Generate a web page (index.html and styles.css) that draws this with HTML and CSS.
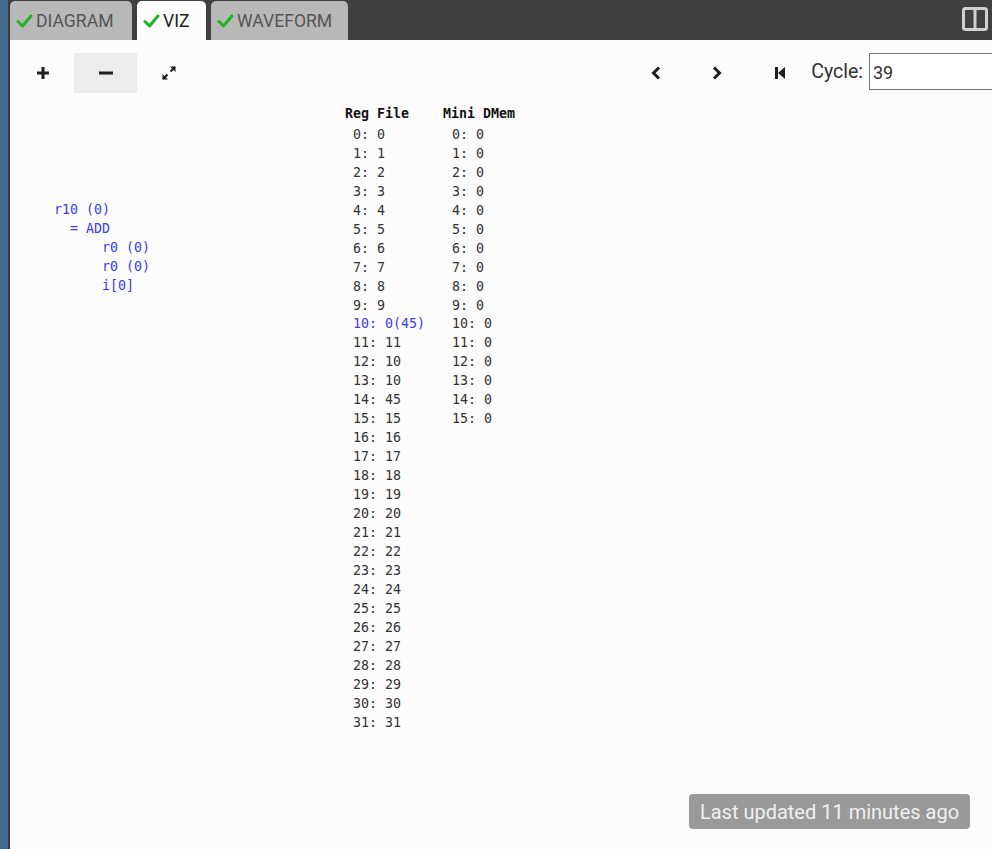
FILE: index.html
```html
<!DOCTYPE html>
<html>
<head>
<meta charset="utf-8">
<link rel="stylesheet" href="styles.css">
</head>
<body>
<div class="side"></div>
<div class="main">
  <div class="topbar">
    <div class="tabs">
      <div class="tab"><svg class="check" viewBox="0 0 16 14" width="17" height="14"><path d="M1.5 7.5 L6 12 L14.5 2" fill="none" stroke="#1fb51f" stroke-width="3" stroke-linecap="round" stroke-linejoin="round"/></svg>DIAGRAM</div>
      <div class="tab active"><svg class="check" viewBox="0 0 16 14" width="17" height="14"><path d="M1.5 7.5 L6 12 L14.5 2" fill="none" stroke="#1fb51f" stroke-width="3" stroke-linecap="round" stroke-linejoin="round"/></svg>VIZ</div>
      <div class="tab wave"><svg class="check" viewBox="0 0 16 14" width="17" height="14"><path d="M1.5 7.5 L6 12 L14.5 2" fill="none" stroke="#1fb51f" stroke-width="3" stroke-linecap="round" stroke-linejoin="round"/></svg>WAVEFORM</div>
    </div>
    <svg class="split" viewBox="0 0 26 24" width="26" height="24"><rect x="1.5" y="1.5" width="23" height="21" rx="2" fill="none" stroke="#d0d0d0" stroke-width="3"/><line x1="13" y1="2" x2="13" y2="22" stroke="#d0d0d0" stroke-width="3"/></svg>
  </div>
  <div class="content">
    <div class="toolbar">
      <div class="zoom">
        <button class="btn"><svg viewBox="0 0 14 14" width="14" height="14"><path d="M7 1v12M1 7h12" stroke="#1f1f1f" stroke-width="3"/></svg></button>
        <button class="btn pressed"><svg viewBox="0 0 14 14" width="14" height="14"><path d="M0 7h14" stroke="#1f1f1f" stroke-width="3"/></svg></button>
        <button class="btn"><svg viewBox="0 0 16 16" width="16" height="16"><path d="M9.5 6.5 L14 2 M6.5 9.5 L2 14" stroke="#1f1f1f" stroke-width="2"/><path d="M9 1.5h5.5v5.5z M7 14.5h-5.5v-5.5z" fill="#1f1f1f"/></svg></button>
      </div>
      <div class="nav">
        <button class="nbtn"><svg viewBox="0 0 10 14" width="10" height="14"><path d="M8 1.5 L2.5 7 L8 12.5" fill="none" stroke="#1f1f1f" stroke-width="3"/></svg></button>
        <button class="nbtn"><svg viewBox="0 0 10 14" width="10" height="14"><path d="M2 1.5 L7.5 7 L2 12.5" fill="none" stroke="#1f1f1f" stroke-width="3"/></svg></button>
        <button class="nbtn first"><svg viewBox="0 0 12 14" width="12" height="14"><rect x="1" y="1" width="3" height="12" fill="#1f1f1f"/><path d="M11 1 L4 7 L11 13z" fill="#1f1f1f"/></svg></button>
        <label class="cycle">Cycle:</label>
        <input class="cycle-input" type="text" value="39">
      </div>
    </div>
    <div class="viz">
      <div class="expr">
        <div>r10 (0)</div>
        <div class="i1">= ADD</div>
        <div class="i2">r0 (0)</div>
        <div class="i2">r0 (0)</div>
        <div class="i2">i[0]</div>
      </div>
      <div class="table regs">
        <div class="head">Reg File</div>
        <div>0: 0</div><div>1: 1</div><div>2: 2</div><div>3: 3</div><div>4: 4</div>
        <div>5: 5</div><div>6: 6</div><div>7: 7</div><div>8: 8</div><div>9: 9</div>
        <div class="hl">10: 0(45)</div><div>11: 11</div><div>12: 10</div><div>13: 10</div><div>14: 45</div>
        <div>15: 15</div><div>16: 16</div><div>17: 17</div><div>18: 18</div><div>19: 19</div>
        <div>20: 20</div><div>21: 21</div><div>22: 22</div><div>23: 23</div><div>24: 24</div>
        <div>25: 25</div><div>26: 26</div><div>27: 27</div><div>28: 28</div><div>29: 29</div>
        <div>30: 30</div><div>31: 31</div>
      </div>
      <div class="table mem">
        <div class="head">Mini DMem</div>
        <div>0: 0</div><div>1: 0</div><div>2: 0</div><div>3: 0</div><div>4: 0</div>
        <div>5: 0</div><div>6: 0</div><div>7: 0</div><div>8: 0</div><div>9: 0</div>
        <div>10: 0</div><div>11: 0</div><div>12: 0</div><div>13: 0</div><div>14: 0</div>
        <div>15: 0</div>
      </div>
    </div>
    <div class="badge">Last updated 11 minutes ago</div>
  </div>
</div>
</body>
</html>
```
FILE: styles.css
```css
html, body {
  margin: 0;
  padding: 0;
  height: 100%;
  overflow: hidden;
}
body {
  display: flex;
  font-family: Roboto, "Liberation Sans", sans-serif;
  background: #fcfcfc;
}
.side {
  width: 8px;
  flex: none;
  background: #44698f;
  border-right: 2px solid #3c3c3c;
}
.main {
  flex: 1;
  display: flex;
  flex-direction: column;
  min-width: 0;
}
.topbar {
  height: 40px;
  flex: none;
  background: #404040;
  display: flex;
  align-items: flex-end;
  justify-content: space-between;
}
.tabs {
  display: flex;
  gap: 5px;
  height: 40px;
  align-items: flex-end;
}
.tab {
  height: 39px;
  box-sizing: border-box;
  padding: 0 0 0 6px;
  display: flex;
  align-items: center;
  background: #b8b8b8;
  color: #555;
  font-size: 17.6px;
  border-radius: 5px 5px 0 0;
  width: 122px;
}
.tab.active {
  background: #fcfcfc;
  color: #222;
  width: 69px;
}
.tab.wave {
  width: 137px;
}
.check {
  margin-right: 3px;
  margin-top: 1px;
}
.split {
  margin: 0 4px 9px 0;
}
.content {
  flex: 1;
  position: relative;
}
.toolbar {
  display: flex;
  justify-content: space-between;
  align-items: center;
  padding: 13px 0 0 1px;
}
.zoom {
  display: flex;
}
.btn {
  width: 63px;
  height: 40px;
  border: none;
  background: transparent;
  display: flex;
  align-items: center;
  justify-content: center;
  padding: 0;
}
.btn.pressed {
  background: #ececec;
}
.nav {
  display: flex;
  align-items: center;
}
.nbtn {
  width: 61px;
  height: 40px;
  border: none;
  background: transparent;
  display: flex;
  align-items: center;
  justify-content: center;
  padding: 0;
}
.nbtn.first {
  width: 37px;
  margin-left: 27px;
  justify-content: flex-start;
}
.cycle {
  font-size: 19.5px;
  color: #333;
  margin-right: 6px;
  margin-top: -3px;
}
.cycle-input {
  width: 133px;
  height: 37px;
  box-sizing: border-box;
  border: 1px solid #777;
  margin: 0 -10px 3px 0;
  padding: 2px 3px 0;
  font-family: Roboto, "Liberation Sans", sans-serif;
  font-size: 18px;
  color: #333;
  background: #fff;
}
.viz {
  display: flex;
  align-items: flex-start;
  font-family: "DejaVu Sans Mono", monospace;
  font-size: 13.3px;
  line-height: 18.95px;
  color: #333;
  padding-top: 12px;
}
.viz div div {
  white-space: pre;
}
.expr {
  color: #3a3aee;
  margin: 96px 0 0 44px;
  width: 291px;
}
.i1 { padding-left: 16px; }
.i2 { padding-left: 48px; }
.table div {
  padding-left: 8px;
}
.table .head {
  padding-left: 0;
  font-weight: bold;
  color: #111;
  margin-bottom: 2px;
}
.regs {
  width: 98px;
}
.mem div {
  padding-left: 9px;
}
.mem .head {
  padding-left: 0;
}
.hl {
  color: #3a3aee;
}
.badge {
  position: absolute;
  left: 679px;
  top: 754px;
  width: 281px;
  height: 35px;
  box-sizing: border-box;
  background: #999;
  color: #f0f0f0;
  border-radius: 4px;
  font-size: 20px;
  display: flex;
  align-items: center;
  justify-content: center;
}
```
